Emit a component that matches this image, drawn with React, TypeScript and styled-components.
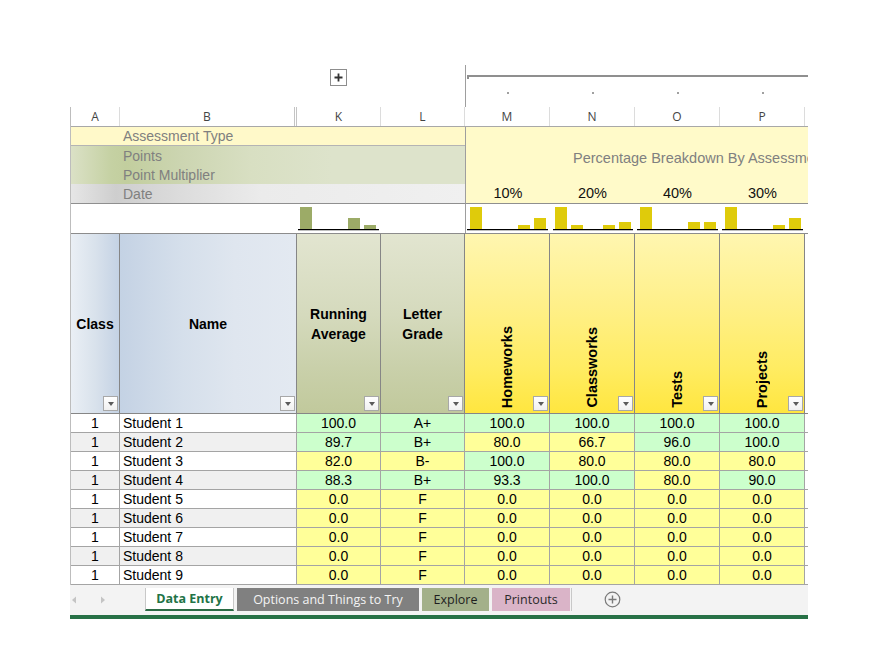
import React from 'react';
import styled, { createGlobalStyle } from 'styled-components';

const COLS = '49px 177px 84px 84px 85px 85px 85px 85px 3px';
const OUTLINE_COLS = '50px 177px 84px 84px 85px 85px 85px 85px 3px';
const ARIAL = '"Liberation Sans", Arial, sans-serif';
const SEGOE = '"Open Sans", "Noto Sans", sans-serif';
const LINE = '#a4a4a4';
const HEAD_LINE = '#868686';
const GREEN = '#ccffcc';
const YELLOW = '#ffff99';

const GlobalStyle = createGlobalStyle`
  html, body { margin: 0; padding: 0; background: #ffffff; }
  body { font-family: ${ARIAL}; color: #000; }
  *, *::before, *::after { box-sizing: border-box; }
`;

const Page = styled.div`
  width: 881px;
  height: 667px;
  padding-left: 70px;
  overflow: hidden;
  background: #fff;
`;

const Sheet = styled.div`
  width: 738px;
`;

/* ---------- outline (grouping) bar ---------- */
const OutlineBar = styled.div`
  display: grid;
  grid-template-columns: ${OUTLINE_COLS};
  height: 107px;
  padding-top: 65px;
`;

const PlusBox = styled.div`
  grid-column: 3;
  justify-self: center;
  align-self: start;
  margin-top: 4px;
  margin-left: -2px;
  width: 17px;
  height: 17px;
  border: 1px solid #8d8d8d;
  display: flex;
  align-items: center;
  justify-content: center;
`;

const Group = styled.div`
  grid-column: 5 / -1;
  border-left: 1px solid #9e9e9e;
  display: grid;
  grid-template-columns: 84px 85px 85px 85px 3px;
  grid-template-rows: 10px 17px 15px;
`;

const Bracket = styled.div`
  grid-column: 1 / -1;
  grid-row: 2;
  margin-left: 1px;
  height: 4px;
  border-top: 2px solid #8f8f8f;
  border-left: 2px solid #8f8f8f;
`;

const Dot = styled.div<{ $col: number }>`
  grid-row: 3;
  grid-column: ${p => p.$col};
  justify-self: center;
  align-self: start;
  width: 2px;
  height: 2px;
  background: #a0a0a0;
`;

/* ---------- grid body ---------- */
const GridBody = styled.div`
  border-left: 1px solid #bdbdbd;
`;

const LetterRow = styled.div`
  display: grid;
  grid-template-columns: ${COLS};
  height: 20px;
  border-bottom: 1px solid #a8a8a8;
`;

const Letter = styled.div<{ $double?: boolean; $last?: boolean }>`
  display: flex;
  align-items: center;
  justify-content: center;
  font: 12px ${SEGOE};
  color: #444;
  border-right: ${p => (p.$last ? 'none' : p.$double ? '3px double #c4c4c4' : '1px solid #dcdcdc')};
`;

const InfoGrid = styled.div`
  display: grid;
  grid-template-columns: ${COLS};
  grid-template-rows: 19px 38px 20px;
`;

type InfoKind = 'type' | 'points' | 'date';
const infoBg: Record<InfoKind, string> = {
  type: '#fff9c9',
  points:
    'linear-gradient(90deg, #dbe1c6 0px, #c5d1a3 40px, #c2ce9e 55px, #ccd5b1 110px, #d8dfc2 180px, #dde3cb 260px, #dde3cb 100%)',
  date: 'linear-gradient(90deg, #e6e6e6 0px, #cecece 45px, #dcdcdc 110px, #ebebeb 190px, #f0f0f0 100%)',
};

const InfoLabel = styled.div<{ $kind: InfoKind }>`
  grid-column: 1 / 5;
  padding-left: 52px;
  padding-top: ${p => (p.$kind === 'type' ? '0' : '1px')};
  background: ${p => infoBg[p.$kind]};
  color: #808080;
  font-size: 14px;
  line-height: ${p => (p.$kind === 'type' ? '19px' : '19px')};
  border-bottom: ${p => (p.$kind === 'points' ? 'none' : `1px solid ${p.$kind === 'date' ? '#8f8f8f' : '#b4b4b4'}`)};
`;

const PercentPanel = styled.div`
  grid-column: 5 / -1;
  grid-row: 1 / -1;
  display: grid;
  grid-template-columns: 84px 85px 85px 85px 3px;
  grid-template-rows: 57px 19px;
  background: #fffac9;
  border-left: 1px solid #9e9e9e;
  border-bottom: 1px solid #8f8f8f;
`;

const PanelCaption = styled.div`
  grid-column: 1 / -1;
  align-self: center;
  padding-top: 4px;
  padding-left: 107px;
  color: #808080;
  font-size: 14.5px;
  white-space: nowrap;
  overflow: hidden;
`;

const Percent = styled.div`
  grid-row: 2;
  text-align: center;
  font-size: 14.5px;
  line-height: 19px;
  color: #111;
`;

/* ---------- chart row ---------- */
const ChartRow = styled.div`
  display: grid;
  grid-template-columns: ${COLS};
  height: 30px;
  border-bottom: 1px solid #8c8c8c;
`;

const ChartCell = styled.div<{ $span?: string; $divider?: boolean }>`
  grid-column: ${p => p.$span ?? 'auto'};
  border-left: ${p => (p.$divider ? '1px solid #9e9e9e' : 'none')};
  overflow: visible;
`;

const MiniChart: React.FC<{ bars: number[]; color: string; x0: number; ax0: number; ax1: number }> = ({
  bars,
  color,
  x0,
  ax0,
  ax1,
}) => (
  <svg width="85" height="29" style={{ display: 'block', overflow: 'visible' }}>
    {bars.map((h, i) =>
      h > 0 ? <rect key={i} x={x0 + i * 16} y={25 - h} width={12} height={h} fill={color} /> : null,
    )}
    <line x1={ax0} x2={ax1} y1={25.6} y2={25.6} stroke="#000" strokeWidth={1.3} />
  </svg>
);

/* ---------- header row ---------- */
type HeadKind = 'class' | 'name' | 'olive' | 'yellow' | 'blank';
const headBg: Record<HeadKind, string> = {
  class: 'linear-gradient(90deg, #eaeff5 0%, #d9e2ec 50%, #c4d2e4 100%)',
  name: 'linear-gradient(90deg, #c4d2e4 0%, #d5dfeb 35%, #dfe6ef 65%, #e3e9f1 100%)',
  olive: 'linear-gradient(180deg, #e2e5d0 0%, #d5dabd 45%, #c9d0aa 75%, #c1c99c 100%)',
  yellow: 'linear-gradient(180deg, #fff6b0 0%, #fff089 40%, #ffec62 75%, #ffe63f 100%)',
  blank: '#ffffff',
};

const HeaderRow = styled.div`
  display: grid;
  grid-template-columns: ${COLS};
  height: 180px;
  border-bottom: 1px solid ${HEAD_LINE};
`;

const HeadCell = styled.div<{ $kind: HeadKind; $rotated?: boolean }>`
  position: relative;
  display: flex;
  justify-content: center;
  align-items: ${p => (p.$rotated ? 'flex-end' : 'center')};
  padding-bottom: ${p => (p.$rotated ? '5px' : '0')};
  background: ${p => headBg[p.$kind]};
  border-right: ${p => (p.$kind === 'blank' ? 'none' : `1px solid ${HEAD_LINE}`)};
  font: bold 14px/20px ${ARIAL};
  text-align: center;
  color: #000;
`;

const RotatedLabel = styled.span`
  writing-mode: vertical-rl;
  transform: rotate(180deg);
  white-space: nowrap;
  line-height: 16px;
  font-size: 14.5px;
`;

const DropButton = styled.div`
  position: absolute;
  right: 1px;
  bottom: 2px;
  width: 15px;
  height: 15px;
  border: 1px solid #a8a8a8;
  background: linear-gradient(180deg, #ffffff 0%, #f0f0f0 100%);
  display: flex;
  align-items: center;
  justify-content: center;

  &::after {
    content: '';
    width: 0;
    height: 0;
    border-left: 3.5px solid transparent;
    border-right: 3.5px solid transparent;
    border-top: 4px solid #5a5a5a;
  }
`;

/* ---------- data rows ---------- */
const DataRow = styled.div`
  display: grid;
  grid-template-columns: ${COLS};
  height: 19px;
  border-bottom: 1px solid ${LINE};
`;

const Cell = styled.div<{ $bg: string; $left?: boolean; $last?: boolean }>`
  background: ${p => p.$bg};
  border-right: ${p => (p.$last ? 'none' : `1px solid ${LINE}`)};
  font-size: 14px;
  line-height: 18px;
  text-align: ${p => (p.$left ? 'left' : 'center')};
  padding-left: ${p => (p.$left ? '3px' : '0')};
  white-space: nowrap;
  overflow: hidden;
  color: #000;
`;

/* ---------- sheet tabs ---------- */
const TabStrip = styled.div`
  display: flex;
  align-items: flex-start;
  height: 30px;
  padding-top: 3px;
  background: #f3f3f3;
`;

const Nav = styled.div`
  width: 75px;
  height: 23px;
  display: flex;
  align-items: center;
  gap: 23px;
  padding-left: 1px;
`;

const Tab = styled.div<{ $w: number; $bg: string; $fg: string; $active?: boolean }>`
  width: ${p => p.$w}px;
  height: 23px;
  margin-left: ${p => (p.$active ? '0' : '3px')};
  display: flex;
  align-items: center;
  justify-content: center;
  background: ${p => p.$bg};
  color: ${p => p.$fg};
  font: ${p => (p.$active ? 'bold' : 'normal')} 12.5px ${SEGOE};
  white-space: nowrap;
  border-left: ${p => (p.$active ? '1px solid #c8c8c8' : 'none')};
  border-right: ${p => (p.$active ? '1px solid #c8c8c8' : 'none')};
  border-bottom: ${p => (p.$active ? '2px solid #2b6b45' : 'none')};
`;

const TabSeparator = styled.div`
  width: 1px;
  height: 23px;
  margin-left: 1px;
  background: #c8c8c8;
`;

const AddSheet = styled.div`
  margin-left: 32px;
  height: 23px;
  display: flex;
  align-items: center;
`;

const GreenBar = styled.div`
  height: 4px;
  background: #277146;
`;

/* ---------- data ---------- */
const rows: string[][] = [
  ['100.0', 'A+', '100.0', '100.0', '100.0', '100.0'],
  ['89.7', 'B+', '80.0', '66.7', '96.0', '100.0'],
  ['82.0', 'B-', '100.0', '80.0', '80.0', '80.0'],
  ['88.3', 'B+', '93.3', '100.0', '80.0', '90.0'],
  ['0.0', 'F', '0.0', '0.0', '0.0', '0.0'],
  ['0.0', 'F', '0.0', '0.0', '0.0', '0.0'],
  ['0.0', 'F', '0.0', '0.0', '0.0', '0.0'],
  ['0.0', 'F', '0.0', '0.0', '0.0', '0.0'],
  ['0.0', 'F', '0.0', '0.0', '0.0', '0.0'],
];

const tone = (v: string) => (parseFloat(v) >= 85 ? GREEN : YELLOW);

const categories = ['Homeworks', 'Classworks', 'Tests', 'Projects'];
const percents = ['10%', '20%', '40%', '30%'];
const charts: { bars: number[]; x0: number; ax0: number; ax1: number }[] = [
  { bars: [22, 0, 0, 4, 11], x0: 4, ax0: 1, ax1: 82 },
  { bars: [22, 4, 0, 4, 7], x0: 5, ax0: 3, ax1: 83 },
  { bars: [22, 0, 0, 7, 7], x0: 5, ax0: 2, ax1: 83 },
  { bars: [22, 0, 0, 4, 11], x0: 5, ax0: 2, ax1: 83 },
];

const ArrowIcon: React.FC<{ dir: 'left' | 'right' }> = ({ dir }) => (
  <svg width="6" height="8" viewBox="0 0 6 8">
    {dir === 'left' ? <path d="M5 0.5 L1 4 L5 7.5 Z" fill="#c4c4c4" /> : <path d="M1 0.5 L5 4 L1 7.5 Z" fill="#c4c4c4" />}
  </svg>
);

export default function App() {
  return (
    <>
      <GlobalStyle />
      <Page>
        <Sheet>
          <OutlineBar>
            <PlusBox>
              <svg width="9" height="9" viewBox="0 0 9 9">
                <path d="M4.5 0.5 V8.5 M0.5 4.5 H8.5" stroke="#333" strokeWidth="1.8" />
              </svg>
            </PlusBox>
            <Group>
              <Bracket />
              {[1, 2, 3, 4].map(c => (
                <Dot key={c} $col={c} />
              ))}
            </Group>
          </OutlineBar>

          <GridBody>
            <LetterRow>
              <Letter>A</Letter>
              <Letter $double>B</Letter>
              <Letter>K</Letter>
              <Letter>L</Letter>
              <Letter>M</Letter>
              <Letter>N</Letter>
              <Letter>O</Letter>
              <Letter>P</Letter>
              <Letter $last />
            </LetterRow>

            <InfoGrid>
              <InfoLabel $kind="type">Assessment Type</InfoLabel>
              <InfoLabel $kind="points">
                Points
                <br />
                Point Multiplier
              </InfoLabel>
              <InfoLabel $kind="date">Date</InfoLabel>
              <PercentPanel>
                <PanelCaption>Percentage Breakdown By Assessment</PanelCaption>
                {percents.map(p => (
                  <Percent key={p}>{p}</Percent>
                ))}
              </PercentPanel>
            </InfoGrid>

            <ChartRow>
              <ChartCell $span="1 / 3" />
              <ChartCell>
                <MiniChart bars={[22, 0, 0, 11, 4]} color="#9cab67" x0={3} ax0={1} ax1={82} />
              </ChartCell>
              <ChartCell />
              {charts.map((c, i) => (
                <ChartCell key={i} $divider={i === 0}>
                  <MiniChart bars={c.bars} color="#dfcb0b" x0={c.x0} ax0={c.ax0} ax1={c.ax1} />
                </ChartCell>
              ))}
              <ChartCell />
            </ChartRow>

            <HeaderRow>
              <HeadCell $kind="class">
                Class
                <DropButton />
              </HeadCell>
              <HeadCell $kind="name">
                Name
                <DropButton />
              </HeadCell>
              <HeadCell $kind="olive">
                Running
                <br />
                Average
                <DropButton />
              </HeadCell>
              <HeadCell $kind="olive">
                Letter
                <br />
                Grade
                <DropButton />
              </HeadCell>
              {categories.map(c => (
                <HeadCell key={c} $kind="yellow" $rotated>
                  <RotatedLabel>{c}</RotatedLabel>
                  <DropButton />
                </HeadCell>
              ))}
              <HeadCell $kind="blank" />
            </HeaderRow>

            {rows.map((r, i) => {
              const stripe = i % 2 === 1 ? '#f0f0f0' : '#ffffff';
              return (
                <DataRow key={i}>
                  <Cell $bg={stripe}>1</Cell>
                  <Cell $bg={stripe} $left>
                    Student {i + 1}
                  </Cell>
                  <Cell $bg={tone(r[0])}>{r[0]}</Cell>
                  <Cell $bg={tone(r[0])}>{r[1]}</Cell>
                  {r.slice(2).map((v, j) => (
                    <Cell key={j} $bg={tone(v)}>
                      {v}
                    </Cell>
                  ))}
                  <Cell $bg="#ffffff" $last />
                </DataRow>
              );
            })}
          </GridBody>

          <TabStrip>
            <Nav>
              <ArrowIcon dir="left" />
              <ArrowIcon dir="right" />
            </Nav>
            <Tab $w={89} $bg="#ffffff" $fg="#217346" $active>
              Data Entry
            </Tab>
            <Tab $w={182} $bg="#808080" $fg="#f4f4f4">
              Options and Things to Try
            </Tab>
            <Tab $w={67} $bg="#a3b08a" $fg="#1e1e1e">
              Explore
            </Tab>
            <Tab $w={78} $bg="#dab4c8" $fg="#2a2a2a">
              Printouts
            </Tab>
            <TabSeparator />
            <AddSheet>
              <svg width="17" height="17" viewBox="0 0 17 17">
                <circle cx="8.5" cy="8.5" r="7.3" fill="none" stroke="#7a7a7a" strokeWidth="1.2" />
                <path d="M8.5 4.5 V12.5 M4.5 8.5 H12.5" stroke="#7a7a7a" strokeWidth="1.4" />
              </svg>
            </AddSheet>
          </TabStrip>
          <GreenBar />
        </Sheet>
      </Page>
    </>
  );
}
